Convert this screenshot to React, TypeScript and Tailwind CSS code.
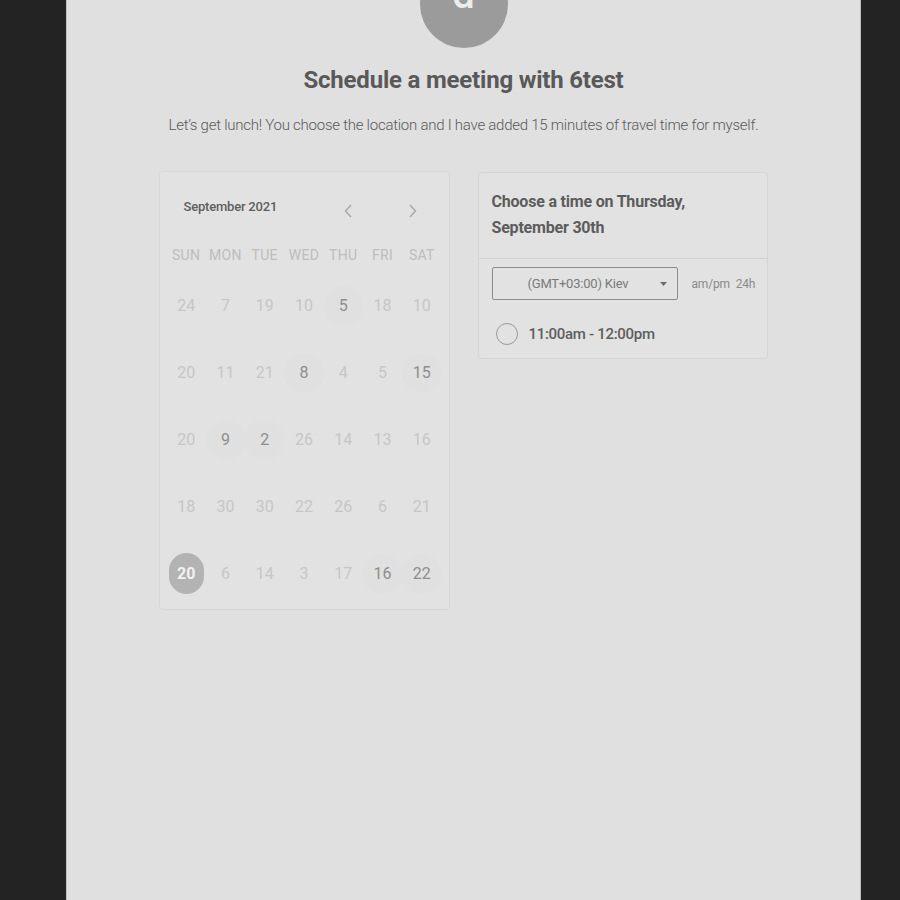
import React from "react";

const rows: number[][] = [
  [24, 7, 19, 10, 5, 18, 10],
  [20, 11, 21, 8, 4, 5, 15],
  [20, 9, 2, 26, 14, 13, 16],
  [18, 30, 30, 22, 26, 6, 21],
  [20, 6, 14, 3, 17, 16, 22],
];

const dark: Record<string, boolean> = {
  "0-4": true,
  "1-3": true,
  "1-6": true,
  "2-1": true,
  "2-2": true,
  "4-5": true,
  "4-6": true,
};

const days = ["SUN", "MON", "TUE", "WED", "THU", "FRI", "SAT"];

export default function App() {
  return (
    <div
      className="w-full h-[900px] overflow-hidden bg-[#232323]"
      style={{ fontFamily: "Roboto, 'Noto Sans', sans-serif" }}
    >
      <div className="ml-[66px] w-[795px] h-full bg-[#e0e0e0] border-l border-r border-[#bdbdbd] flex flex-col items-center">
        <div className="mt-[-40px] w-[88px] h-[88px] rounded-full bg-[#9b9b9b] flex items-start justify-center">
          <span className="text-[#ececec] text-[40px] leading-none mt-[15px] font-medium">d</span>
        </div>
        <h1 className="mt-[17px] text-[24px] leading-[30px] font-bold text-[#595959] tracking-[-0.2px]">
          Schedule a meeting with 6test
        </h1>
        <p className="mt-[20px] text-[15px] leading-[20px] font-light text-[#5a5a5a] tracking-[-0.25px]">
          Let’s get lunch! You choose the location and I have added 15 minutes of travel time for myself.
        </p>

        <div className="mt-[36px] flex items-start gap-[28px] ml-[-1px]">
          {/* Calendar */}
          <div className="w-[291px] h-[439px] rounded-[4px] border border-[#d7d7d7] bg-[#e2e2e2] px-[7px] flex flex-col">
            <div className="h-[70px] flex items-center">
              <span className="ml-[17px] text-[13px] font-medium text-[#5e5e5e] tracking-[-0.2px]">September 2021</span>
              <div className="ml-auto mr-[24px] mt-[8px] flex items-center gap-[55px]">
                <svg width="10" height="16" viewBox="0 0 10 16" fill="none">
                  <path d="M8 2 L2.5 8 L8 14" stroke="#a9a9a9" strokeWidth="1.5" />
                </svg>
                <svg width="10" height="16" viewBox="0 0 10 16" fill="none">
                  <path d="M2 2 L7.5 8 L2 14" stroke="#a9a9a9" strokeWidth="1.5" />
                </svg>
              </div>
            </div>
            <div className="grid grid-cols-7 h-[26px] items-center">
              {days.map((d) => (
                <div key={d} className="text-center text-[14px] text-[#bdbdbd] tracking-[0.3px]">
                  {d}
                </div>
              ))}
            </div>
            <div className="mt-[4px] flex flex-col">
              {rows.map((r, ri) => (
                <div key={ri} className="grid grid-cols-7 h-[67px] items-center">
                  {r.map((n, ci) => {
                    const sel = ri === 4 && ci === 0;
                    const dk = dark[`${ri}-${ci}`];
                    return (
                      <div key={ci} className="flex items-center justify-center">
                        {sel ? (
                          <div className="w-[35px] h-[41px] rounded-full bg-[#b3b3b3] flex items-center justify-center text-[16px] font-bold text-[#f2f2f2]">
                            {n}
                          </div>
                        ) : (
                          <div
                            className={
                              dk
                                ? "w-[40px] h-[40px] rounded-full bg-[#e0e0e0] flex items-center justify-center text-[16px] text-[#8e8e8e]"
                                : "w-[40px] h-[40px] rounded-full flex items-center justify-center text-[16px] text-[#c6c6c6]"
                            }
                          >
                            {n}
                          </div>
                        )}
                      </div>
                    );
                  })}
                </div>
              ))}
            </div>
          </div>

          {/* Time card */}
          <div className="w-[290px] mt-[1px] rounded-[4px] border border-[#d5d5d5] bg-[#e2e2e2]">
            <div className="px-[13px] pt-[16px] pb-[17px] border-b border-[#d3d3d3]">
              <div className="text-[16px] leading-[26px] font-bold text-[#5c5c5c] tracking-[-0.2px]">
                Choose a time on Thursday,
                <br />
                September 30th
              </div>
            </div>
            <div className="px-[13px] pt-[8px] flex items-center">
              <div className="shrink-0 w-[186px] h-[33px] border-[1.5px] border-[#8c8c8c] rounded-[2px] flex items-center pl-[35px] pr-[10px]">
                <span className="text-[13px] text-[#7a7a7a] tracking-[-0.2px]">(GMT+03:00) Kiev</span>
                <svg className="ml-auto" width="7" height="4" viewBox="0 0 7 4">
                  <path d="M0 0 L7 0 L3.5 4 Z" fill="#6e6e6e" />
                </svg>
              </div>
              <span className="ml-[14px] text-[12px] text-[#8a8a8a] tracking-[-0.2px]">am/pm</span>
              <span className="ml-[6px] text-[12px] text-[#8a8a8a] tracking-[-0.2px]">24h</span>
            </div>
            <div className="px-[17px] mt-[10px] h-[48px] flex items-center">
              <div className="w-[22px] h-[22px] rounded-full border-[1.5px] border-[#9a9a9a]" />
              <span className="ml-[11px] text-[15px] font-medium text-[#5e5e5e] tracking-[-0.3px]">11:00am - 12:00pm</span>
            </div>
          </div>
        </div>
      </div>
    </div>
  );
}
